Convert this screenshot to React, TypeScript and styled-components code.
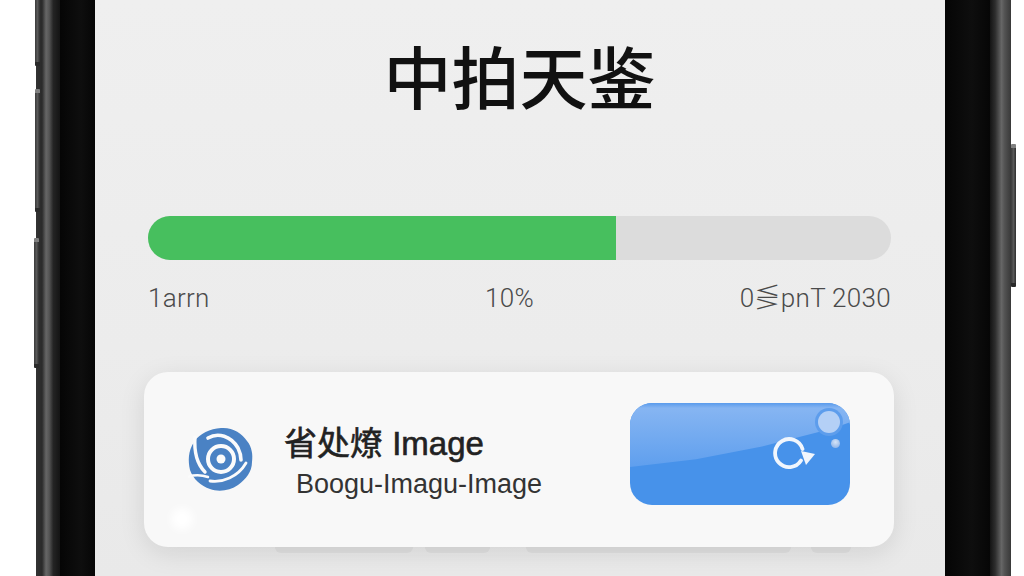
import { createGlobalStyle, styled } from "styled-components";

const GlobalStyle = createGlobalStyle`
  html, body {
    margin: 0;
    padding: 0;
    background: #fff;
    overflow: hidden;
  }
`;

const CJK = `"Noto Sans CJK SC", "Liberation Sans", sans-serif`;
const SANS = `"Liberation Sans", "Noto Sans CJK SC", sans-serif`;

const sideKeys = [
  { top: -4, height: 70, left: -1 },
  { top: 89, height: 123, left: -1 },
  { top: 238, height: 130, left: -2 },
];

export default function App() {
  return (
    <>
      <GlobalStyle />
      <Stage>
        <Rail $side="left">
          {sideKeys.map((k) => (
            <SideKey key={k.top} $top={k.top} $height={k.height} $left={k.left} />
          ))}
        </Rail>
        <Bezel $width={35} />
        <Screen>
          <Title>中拍天鉴</Title>
          <Progress>
            <ProgressFill $value={63} />
          </Progress>
          <Labels>
            <Label>1arrn</Label>
            <Label $shift={-20}>10%</Label>
            <Label>0⋚pnT 2030</Label>
          </Labels>
          <Card>
            <Glow />
            <Logo />
            <CardText>
              <CardTitle>省处燎 Image</CardTitle>
              <CardSub>Boogu-Imagu-Image</CardSub>
            </CardText>
            <RefreshButton>
              <Shine />
              <BigBubble />
              <SmallBubble />
              <RefreshGlyph />
            </RefreshButton>
          </Card>
          <Stubs>
            <Stub $width={138} $gap={12} />
            <Stub $width={65} $gap={36} />
            <Stub $width={265} $gap={20} />
            <Stub $width={40} $gap={0} />
          </Stubs>
        </Screen>
        <Bezel $width={45} />
        <Rail $side="right">
          <SideKey $top={144} $height={143} $right={-5} />
        </Rail>
      </Stage>
    </>
  );
}

// blue disc with the white spiral cut out of it
function Logo() {
  return (
    <LogoSvg viewBox="0 0 66 66" aria-hidden="true">
      <path
        d="M33 1 C44 0 54 6 59 14 C64 20 65 28 64 35 C64 45 58 52 50 58 C42 64 30 65 22 62 C13 59 5 52 2 43 C0 34 0 24 6 15 C12 6 22 2 33 1 Z"
        fill="#4a82c4"
      />
      <g fill="none" stroke="#fbfbfb" strokeLinecap="round">
        <circle cx="33" cy="32" r="13" strokeWidth="4" />
        <path d="M7 10 C6 24 8 36 17 45" strokeWidth="3.4" />
        <path d="M20 11 C30 5 43 9 50 21 C52 25 53 29 53 33" strokeWidth="3.6" />
        <path d="M-1 50 C8 47 14 48 20 50" strokeWidth="2.4" />
        <path d="M22 54 C34 56 50 50 58 36" strokeWidth="2.8" />
      </g>
      <circle cx="33" cy="32" r="4.5" fill="#fbfbfb" />
    </LogoSvg>
  );
}

function RefreshGlyph() {
  return (
    <GlyphSvg viewBox="0 0 44 40" aria-hidden="true">
      <path
        d="M30.5 12 A14 14 0 1 0 29 23.5"
        fill="none"
        stroke="#f1f6fd"
        strokeWidth="3.8"
        strokeLinecap="round"
      />
      <path d="M29 14 L43 17 L34 28 Z" fill="#f1f6fd" />
    </GlyphSvg>
  );
}

const Stage = styled.div`
  display: flex;
  width: 1024px;
  height: 576px;
  padding-left: 36px;
  box-sizing: border-box;
  overflow: hidden;
  background: #fff;
`;

const Rail = styled.div<{ $side: "left" | "right" }>`
  position: relative;
  flex: none;
  width: ${(p) => (p.$side === "left" ? 24 : 21)}px;
  background: ${(p) =>
    p.$side === "left"
      ? "linear-gradient(90deg, #333 0, #2a2a2a 25%, #666 42%, #555 55%, #242424 72%, #141414 100%)"
      : "linear-gradient(90deg, #141414 0, #2e2e2e 25%, #666 55%, #525252 70%, #383838 100%)"};
`;

const SideKey = styled.div<{ $top: number; $height: number; $left?: number; $right?: number }>`
  position: absolute;
  top: ${(p) => p.$top}px;
  height: ${(p) => p.$height}px;
  width: 5px;
  ${(p) => (p.$left !== undefined ? `left: ${p.$left}px;` : "")}
  ${(p) => (p.$right !== undefined ? `right: ${p.$right}px;` : "")}
  box-sizing: border-box;
  border-radius: 1px;
  background: linear-gradient(90deg, #3a3a3a, #585858 50%, #2e2e2e);
  border-top: 4px solid #808080;
  border-bottom: 4px solid #2a2a2a;
`;

const Bezel = styled.div<{ $width: number }>`
  flex: none;
  width: ${(p) => p.$width}px;
  background: linear-gradient(90deg, #050505, #0e0e0e 60%, #060606);
`;

const Screen = styled.main`
  position: relative;
  flex: none;
  width: 850px;
  box-sizing: border-box;
  padding: 35px 54px 0 53px;
  display: flex;
  flex-direction: column;
  background: linear-gradient(180deg, #efefef 0, #ececec 60%, #e9e9e9 100%);
`;

const Title = styled.h1`
  margin: 0;
  height: 80px;
  font-family: ${CJK};
  font-size: 68px;
  line-height: 80px;
  font-weight: 500;
  letter-spacing: 0;
  text-align: center;
  color: #111;
`;

const Progress = styled.div`
  height: 44px;
  margin-top: 101px;
  border-radius: 22px;
  overflow: hidden;
  background: #dcdcdc;
`;

const ProgressFill = styled.div<{ $value: number }>`
  height: 100%;
  width: ${(p) => p.$value}%;
  background: #47bf5e;
`;

const Labels = styled.div`
  display: grid;
  grid-template-columns: 1fr auto 1fr;
  align-items: center;
  margin-top: 24px;
  height: 28px;
  & > :last-child {
    text-align: right;
  }
`;

const Label = styled.span<{ $shift?: number }>`
  display: block;
  height: 28px;
  font-family: "Roboto", ${SANS};
  font-size: 26px;
  line-height: 28px;
  font-weight: 300;
  letter-spacing: 0.3px;
  white-space: nowrap;
  color: #4a4a4a;
  ${(p) => (p.$shift ? `margin-right: ${-p.$shift}px;` : "")}
`;

const Card = styled.section`
  position: relative;
  flex: none;
  display: flex;
  align-items: center;
  height: 175px;
  margin: 60px -3px 0 -4px;
  padding: 0 44px 0 44px;
  box-sizing: border-box;
  border-radius: 24px;
  background: #f8f8f8;
  box-shadow: 0 6px 26px rgba(0, 0, 0, 0.1);
`;

const Glow = styled.span`
  position: absolute;
  left: 27px;
  bottom: 17px;
  width: 22px;
  height: 22px;
  border-radius: 50%;
  background: #fff;
  filter: blur(4px);
`;

const LogoSvg = styled.svg`
  flex: none;
  width: 66px;
  height: 66px;
  margin-top: 1px;
`;

const CardText = styled.div`
  flex: 1;
  display: flex;
  flex-direction: column;
  padding-left: 30px;
  margin-top: 6px;
`;

const CardTitle = styled.div`
  font-family: ${SANS};
  font-size: 33px;
  line-height: 40px;
  font-weight: 400;
  -webkit-text-stroke: 0.6px #222;
  white-space: nowrap;
  color: #222;
`;

const CardSub = styled.div`
  margin: 2px 0 0 12px;
  font-family: ${SANS};
  font-size: 27px;
  line-height: 36px;
  white-space: nowrap;
  color: #333;
`;

const RefreshButton = styled.button`
  position: relative;
  flex: none;
  width: 220px;
  height: 102px;
  margin-top: -11px;
  padding: 0;
  overflow: hidden;
  border: none;
  border-radius: 22px;
  background: #4792ea;
`;

const Shine = styled.span`
  position: absolute;
  left: 0;
  top: 0;
  right: 0;
  height: 64px;
  background: linear-gradient(180deg, #5a9bec 0, #86b5f2 8%, #5f9fee 100%);
  clip-path: polygon(0 100%, 30% 88%, 60% 68%, 92% 40%, 100% 30%, 100% 0, 0 0);
`;

const BigBubble = styled.span`
  position: absolute;
  left: 188px;
  top: 8px;
  width: 22px;
  height: 22px;
  border-radius: 50%;
  background: #b4d0f6;
  box-shadow: 0 0 0 3px #5d9dec;
`;

const SmallBubble = styled.span`
  position: absolute;
  left: 201px;
  top: 36px;
  width: 9px;
  height: 9px;
  border-radius: 50%;
  background: radial-gradient(circle at 50% 35%, #d5e4f8, #7fa9e4);
`;

const GlyphSvg = styled.svg`
  position: absolute;
  left: 142px;
  top: 34px;
  width: 44px;
  height: 40px;
`;

const Stubs = styled.div`
  display: flex;
  padding-left: 127px;
`;

const Stub = styled.span<{ $width: number; $gap: number }>`
  width: ${(p) => p.$width}px;
  height: 6px;
  margin-right: ${(p) => p.$gap}px;
  border-radius: 0 0 8px 8px;
  background: #e0e0e0;
`;
